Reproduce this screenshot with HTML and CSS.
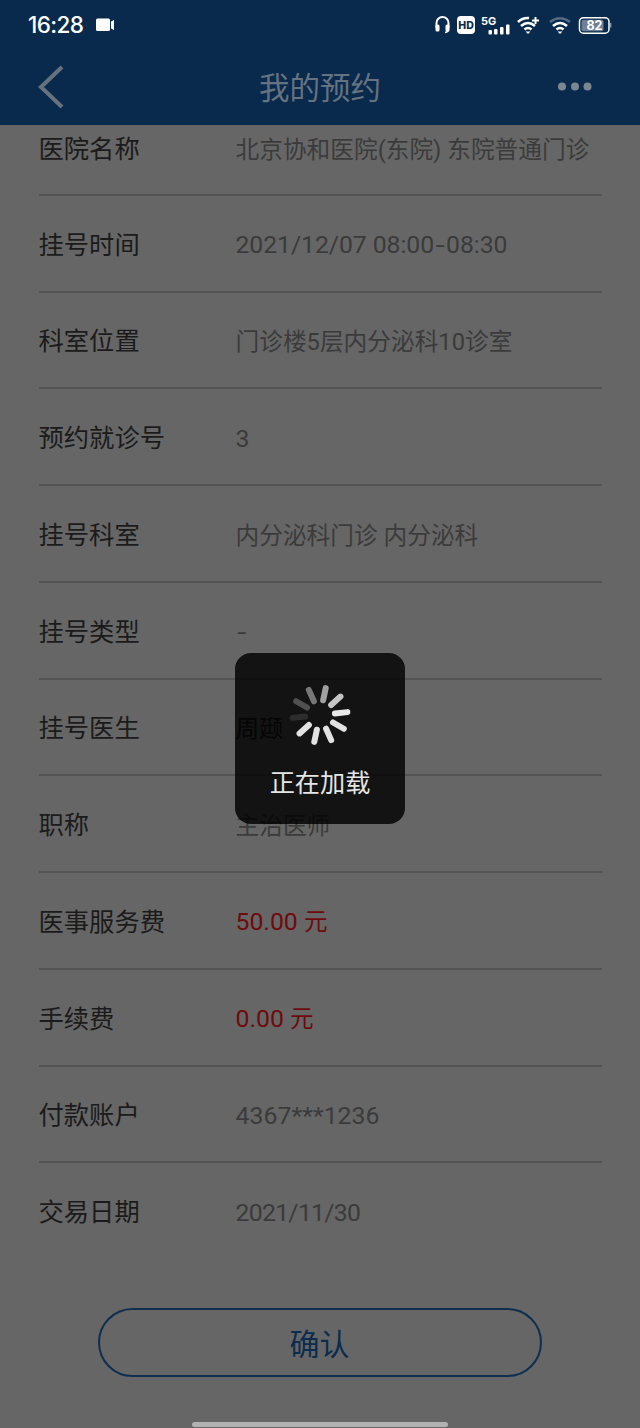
FILE: index.html
```html
<!DOCTYPE html>
<html lang="zh-CN">
<head>
<meta charset="utf-8">
<title>我的预约</title>
<link rel="stylesheet" href="styles.css">
</head>
<body>
<div class="screen">
  <header class="header">
    <div class="status">
      <span class="clock">16:28</span>
      <svg class="camera" width="20" height="14" viewBox="0 0 20 14" fill="#fff"><rect x="0" y="0.500" width="14" height="12.500" rx="1.500"/><path d="M15 3.500l3-1.500v10l-3-1.500z"/></svg>
      <svg class="indicators" width="182" height="24" viewBox="0 0 182 24">
        <path d="M6.500 15V10a6 6 0 0 1 12 0v5" fill="none" stroke="#fff" stroke-width="2"/>
        <path d="M18.500 16q0 3-3.500 3.500" fill="none" stroke="#fff" stroke-width="1.500"/>
        <rect x="5.500" y="11.500" width="4" height="7" rx="1.500" fill="#fff"/><rect x="15.500" y="11.500" width="4" height="7" rx="1.500" fill="#fff"/>
        <rect x="27" y="3" width="18" height="18" rx="4" fill="#fff"/>
        <text x="36" y="16" class="hd" text-anchor="middle">HD</text>
        <text x="51" y="12" class="net">5G</text>
        <g fill="#fff"><rect x="58.500" y="17" width="3.500" height="4.500" rx="1"/><rect x="64" y="16" width="3.500" height="5.500" rx="1"/><rect x="70" y="14" width="3.500" height="7.500" rx="1"/><rect x="76" y="11.500" width="3.500" height="10" rx="1"/></g>
        <g fill="none" stroke="#fff" stroke-width="2.600"><path d="M88 9q4.500-4.500 11-4M91 13q7-6 14 0M94.500 16.500q3.500-3 7 0"/><path d="M102 7.500h7M105.500 4v7" stroke-width="2"/></g><path d="M95.500 18.500h5L98 21z" fill="#fff"/>
        <g fill="none" stroke="#fff" stroke-width="2.600"><path d="M120 9q10-7.500 20 0" opacity=".3"/><path d="M123 13q7-6 14 0M126.500 16.500q3.500-3 7 0"/></g><path d="M127.500 18.500h5L130 21z" fill="#fff"/>
        <rect x="149.500" y="4.700" width="29.500" height="15.500" rx="4" fill="none" stroke="#fff" stroke-width="1.500"/>
        <rect x="151.500" y="6.700" width="22" height="11.500" rx="2" fill="#6d8096"/>
        <path d="M180.600 10v4.500" stroke="#8a99aa" stroke-width="1.500"/>
        <text x="164.500" y="17" class="battery" text-anchor="middle">82</text>
      </svg>
    </div>
    <nav class="nav">
      <svg width="36" height="44" viewBox="0 0 36 44"><path d="M24 2L3 22L24 42" fill="none" stroke="#65717e" stroke-width="4"/></svg>
      <h1 class="title">我的预约</h1>
      <svg width="36" height="10" viewBox="0 0 36 10" fill="#7c8690"><circle cx="5" cy="4.500" r="4"/><circle cx="18" cy="4.500" r="4"/><circle cx="30.500" cy="4.500" r="4"/></svg>
    </nav>
  </header>
  <main class="details">
    <div class="row first"><span class="label">医院名称</span><span class="value">北京协和医院(东院) 东院普通门诊</span></div>
    <div class="row"><span class="label">挂号时间</span><span class="value number time">2021/12/07 08:00<span class="hyphen">-</span>08:30</span></div>
    <div class="row"><span class="label">科室位置</span><span class="value">门诊楼5层内分泌科10诊室</span></div>
    <div class="row"><span class="label">预约就诊号</span><span class="value number">3</span></div>
    <div class="row"><span class="label">挂号科室</span><span class="value">内分泌科门诊 内分泌科</span></div>
    <div class="row"><span class="label">挂号类型</span><span class="value number"><span class="hyphen">-</span></span></div>
    <div class="row"><span class="label">挂号医生</span><span class="value doctor">周颋</span></div>
    <div class="row"><span class="label">职称</span><span class="value">主治医师</span></div>
    <div class="row"><span class="label">医事服务费</span><span class="value number fee">50.00 <span class="unit">元</span></span></div>
    <div class="row"><span class="label">手续费</span><span class="value number fee">0.00 <span class="unit">元</span></span></div>
    <div class="row"><span class="label">付款账户</span><span class="value number account">4367***1236</span></div>
    <div class="row"><span class="label">交易日期</span><span class="value number date">2021/11/30</span></div>
  </main>
  <button class="confirm">确认</button>
  <div class="home"></div>
  <div class="toast">
    <svg class="spinner" width="64" height="64" viewBox="-32 -32 64 64" stroke-width="6" stroke-linecap="round">
      <g transform="rotate(-6)"><path d="M15 0H27.500" stroke="#e8e8e8"/><path d="M15 0H27.500" stroke="#e2e2e2" transform="rotate(36)"/><path d="M15 0H27.500" stroke="#e2e2e2" transform="rotate(72)"/><path d="M15 0H27.500" stroke="#e2e2e2" transform="rotate(108)"/><path d="M15 0H27.500" stroke="#e2e2e2" transform="rotate(144)"/><path d="M15 0H27.500" stroke="#2d2d2d" transform="rotate(180)"/><path d="M15 0H27.500" stroke="#505050" transform="rotate(216)"/><path d="M15 0H27.500" stroke="#777" transform="rotate(252)"/><path d="M15 0H27.500" stroke="#a0a0a0" transform="rotate(288)"/><path d="M15 0H27.500" stroke="#c5c5c5" transform="rotate(324)"/></g>
    </svg>
    <span class="loading">正在加载</span>
  </div>
</div>
</body>
</html>
```
FILE: styles.css
```css
* { box-sizing: border-box; }
body { margin: 0; background: #666; font-family: Roboto, "Noto Sans CJK SC", sans-serif; }
.screen { position: relative; width: 640px; height: 1428px; overflow: hidden; display: flex; flex-direction: column; background: #666; }
.header { height: 124.500px; background: #092a4d; }
.status { height: 49px; display: flex; align-items: center; padding: 0 28px 0 28px; }
.clock { color: #fff; font: 500 22.500px/28px Inter, sans-serif; letter-spacing: -0.600px; }
.camera { margin-left: 12.500px; }
.indicators { margin-left: auto; }
.hd { font: 800 10.500px Inter, sans-serif; fill: #092a4d; }
.net { font: 700 11px Inter, sans-serif; fill: #fff; }
.battery { font: 700 12.500px Inter, sans-serif; fill: #fff; }
.nav { height: 75px; display: flex; align-items: center; justify-content: space-between; padding: 0 47px 0 38px; }
.title { margin: 0; padding: 0 0 2px 9px; font: 400 30.500px/40px "Noto Sans CJK SC", sans-serif; color: #65727f; }
.details { padding: 0 38.500px; }
.row { height: 96.750px; display: flex; align-items: center; padding-top: 5px; border-bottom: 2px solid #545454; }
.row:last-child { border-bottom-color: transparent; }
.first { height: 71.300px; padding: 0 0 19px; }
.label { width: 197px; flex: none; font-size: 25.300px; line-height: 36px; color: #1b1b1b; font-weight: 400; }
.value { font-size: 23.700px; line-height: 36px; color: #3b3b3b; white-space: nowrap; font-weight: 400; }
.number { font-size: 24.800px; padding-bottom: 1px; }
.hyphen { display: inline-block; width: 12px; text-align: center; transform: scaleX(1.35); }
.time { letter-spacing: -0.080px; }
.date { letter-spacing: -0.720px; }
.account { letter-spacing: 0.050px; }
.doctor { color: #1b1b1b; }
.unit { font-size: 23.600px; }
.fee { color: #6e0b0e; }
.confirm { width: 444px; height: 69px; margin: 48.200px 0 0 97.500px; padding: 0 0 1px; border: 2px solid #102f4f; border-radius: 35px; background: none; font: 400 30px/40px "Noto Sans CJK SC", sans-serif; color: #0c2c4f; }
.home { width: 256px; height: 5px; margin: auto auto 1px; border-radius: 3px; background: #b2b2b2; }
.toast { position: absolute; left: 235px; top: 653px; width: 170px; height: 171px; border-radius: 16px; background: rgba(0, 0, 0, .81); display: flex; flex-direction: column; align-items: center; padding-top: 30px; }
.loading { margin-top: 15px; font: 400 25.200px/38px "Noto Sans CJK SC", sans-serif; color: #e5e5e5; }
```
